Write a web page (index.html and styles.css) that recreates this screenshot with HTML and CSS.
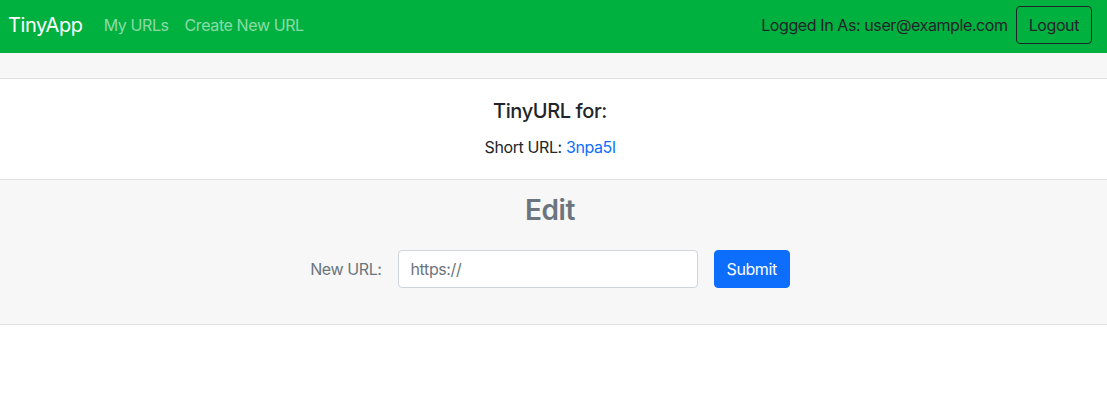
FILE: index.html
```html
<!DOCTYPE html>
<html lang="en">
<head>
<meta charset="utf-8">
<title>TinyApp</title>
<link rel="stylesheet" href="styles.css">
</head>
<body>
<nav class="navbar">
  <div class="nav-left">
    <a class="brand" href="#">TinyApp</a>
    <a class="nav-link" href="#">My URLs</a>
    <a class="nav-link" href="#">Create New URL</a>
  </div>
  <div class="nav-right">
    <span class="logged">Logged In As: user@example.com</span>
    <button class="btn btn-outline">Logout</button>
  </div>
</nav>
<main class="card">
  <div class="card-header"></div>
  <div class="card-body">
    <h5 class="card-title">TinyURL for:</h5>
    <p class="card-text">Short URL: <a href="#" class="link">3npa5l</a></p>
  </div>
  <div class="card-footer">
    <h3 class="edit-title">Edit</h3>
    <form class="edit-form">
      <label class="form-label" for="newurl">New URL:</label>
      <input class="form-input" id="newurl" type="text" placeholder="https://">
      <button class="btn btn-primary" type="submit">Submit</button>
    </form>
  </div>
</main>
</body>
</html>
```

FILE: styles.css
```css
* { box-sizing: border-box; }
body {
  margin: 0;
  font-family: Inter, "Liberation Sans", sans-serif;
  font-size: 16px;
  line-height: 1.5;
  letter-spacing: -0.025em;
  color: #212529;
  background: #fff;
}
.navbar {
  height: 53px;
  background: #00b140;
  display: flex;
  align-items: center;
  justify-content: space-between;
  padding: 0 15px 3px 8px;
}
.nav-left { display: flex; align-items: center; }
.brand {
  color: #fff;
  font-size: 20px;
  text-decoration: none;
  margin-right: 21px;
}
.nav-link {
  color: rgba(255,255,255,0.55);
  text-decoration: none;
  margin-right: 16px;
}
.nav-right { display: flex; align-items: center; gap: 8px; }
.logged { color: #212529; }
.btn {
  font-family: inherit;
  font-size: 16px;
  line-height: 1.5;
  letter-spacing: inherit;
  height: 38px;
  padding: 0 12px;
  border-radius: 4px;
  cursor: pointer;
}
.btn-outline {
  background: transparent;
  border: 1px solid #212529;
  color: #212529;
}
.card {
  display: block;
}
.card-header {
  height: 26px;
  background: #f7f7f7;
  border-bottom: 1px solid #dfdfdf;
}
.card-body {
  height: 101px;
  padding: 20px 23px 0 16px;
  text-align: center;
  border-bottom: 1px solid #dfdfdf;
}
.card-title {
  margin: 0 0 12px;
  font-size: 20px;
  font-weight: 500;
  line-height: 1.2;
}
.card-text { margin: 0; }
.link { color: #0d6efd; text-decoration: none; }
.card-footer {
  height: 145px;
  background: #f7f7f7;
  border-bottom: 1px solid #dfdfdf;
  padding: 14px 23px 0 16px;
  text-align: center;
}
.edit-title {
  margin: 0 0 22px;
  font-size: 28px;
  font-weight: 600;
  line-height: 1.2;
  color: #6c757d;
}
.edit-form {
  display: flex;
  justify-content: center;
  align-items: center;
  gap: 16px;
}
.form-label { color: #6c757d; }
.form-input {
  width: 300px;
  height: 38px;
  padding: 6px 12px;
  font-family: inherit;
  font-size: 16px;
  letter-spacing: inherit;
  border: 1px solid #ced4da;
  border-radius: 4px;
  background: #fff;
}
.form-input::placeholder { color: #6c757d; }
.btn-primary {
  background: #0d6efd;
  border: 1px solid #0d6efd;
  color: #fff;
}
```
